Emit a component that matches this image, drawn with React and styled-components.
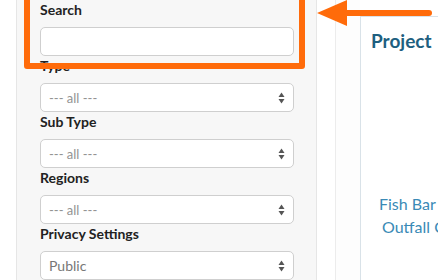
import styled, { createGlobalStyle } from "styled-components";

const GlobalStyle = createGlobalStyle`
  html, body {
    margin: 0;
    padding: 0;
    background: #ffffff;
    overflow: hidden;
  }
  body {
    font-family: Lato, "Open Sans", sans-serif;
  }
`;

const Page = styled.div`
  position: relative;
  display: flex;
  width: 438px;
  height: 280px;
  overflow: hidden;
  padding-left: 16px;
  box-sizing: border-box;
`;

const Sidebar = styled.aside`
  flex: none;
  width: 301px;
  box-sizing: border-box;
  background: #f7f7f7;
  border-left: 1px solid #e6e6e6;
  border-right: 1px solid #e6e6e6;
  padding: 0 22px 0 23px;
  display: flex;
  flex-direction: column;
`;

const Field = styled.div`
  display: flex;
  flex-direction: column;
`;

const Label = styled.label`
  font-size: 14px;
  font-weight: 700;
  line-height: 20px;
  color: #222;
  margin-bottom: 7px;
`;

const Input = styled.div`
  position: relative;
  height: 29px;
  box-sizing: border-box;
  background: #fff;
  border: 1px solid #cfcfcf;
  border-radius: 5px;
  margin-top: ${(p) => (p.$cut ? "-28px" : "0")};
  display: flex;
  align-items: center;
  padding: 0 8px;
  font-size: ${(p) => (p.$big ? "14px" : "13px")};
  color: ${(p) => (p.$big ? "#777" : "#939393")};
`;

const Value = styled.span`
  flex: 1;
`;

const Gap = styled.div`
  flex: none;
  width: 18px;
`;

const Rail = styled.div`
  flex: none;
  width: 24px;
  border-left: 1px solid #ececec;
  background: #fdfdfd;
`;

const Card = styled.section`
  flex: 1;
  min-width: 0;
  margin-top: 16px;
  border-left: 1px solid #d9e2e8;
  border-top: 1px solid #d9e2e8;
  background: #fff;
  padding: 12px 0 0 10px;
  white-space: nowrap;
  overflow: hidden;
`;

const Title = styled.h2`
  margin: 0;
  font-size: 19px;
  font-weight: 700;
  color: #1e5f80;
  line-height: 24px;
`;

const Links = styled.div`
  margin-top: 139px;
  display: flex;
  flex-direction: column;
`;

const LinkLine = styled.a`
  font-size: 16px;
  line-height: 23px;
  color: #3a8ab6;
  text-decoration: none;
  padding-left: ${(p) => p.$indent}px;
`;

const Highlight = styled.div`
  position: absolute;
  left: 24px;
  top: -12px;
  width: 281px;
  height: 81px;
  box-sizing: border-box;
  border: 6px solid #ff6b0a;
  border-radius: 3px;
  pointer-events: none;
`;

const Pointer = styled.svg`
  position: absolute;
  left: 314px;
  top: 0;
`;

function Arrows() {
  return (
    <svg width="7" height="12" viewBox="0 0 7 12">
      <path d="M3.5 0.5 L6.5 5 L0.5 5 Z" fill="#555" />
      <path d="M3.5 11.5 L6.5 7 L0.5 7 Z" fill="#555" />
    </svg>
  );
}

function SelectField({ label, value, big }) {
  return (
    <Field>
      <Label>{label}</Label>
      <Input $big={big}>
        <Value>{value}</Value>
        <Arrows />
      </Input>
    </Field>
  );
}

export default function App() {
  return (
    <>
      <GlobalStyle />
      <Page>
        <Sidebar>
          <Input $cut />
          <Field>
            <Label>Search</Label>
            <Input />
          </Field>
          <SelectField label="Type" value="--- all ---" />
          <SelectField label="Sub Type" value="--- all ---" />
          <SelectField label="Regions" value="--- all ---" />
          <SelectField label="Privacy Settings" value="Public" big />
        </Sidebar>
        <Gap />
        <Rail />
        <Card>
          <Title>Project</Title>
          <Links>
            <LinkLine $indent={8}>Fish Bar Creek</LinkLine>
            <LinkLine $indent={11}>Outfall Creek</LinkLine>
          </Links>
        </Card>
        <Highlight />
        <Pointer width="120" height="28" viewBox="0 0 120 28">
          <path d="M30 13 L115 13" stroke="#ff6b0a" strokeWidth="6" strokeLinecap="round" />
          <path d="M3 13 L33 0 L33 26 Z" fill="#ff6b0a" />
        </Pointer>
      </Page>
    </>
  );
}
